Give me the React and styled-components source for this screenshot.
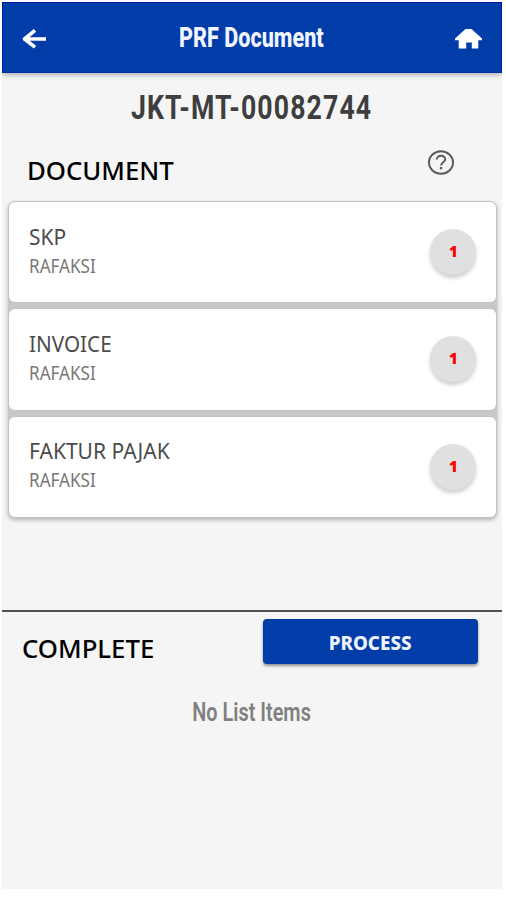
import React from "react";
import styled, { createGlobalStyle } from "styled-components";

const GlobalStyle = createGlobalStyle`
  *, *::before, *::after { box-sizing: border-box; }
  body { margin: 0; background: #fff; }
`;

const Screen = styled.main`
  display: flex;
  flex-direction: column;
  width: 500px;
  height: 887px;
  margin: 2px 0 0 2px;
  background: #f5f5f5;
  overflow: hidden;
  font-family: "Noto Sans", "Open Sans", sans-serif;
`;

const Header = styled.header`
  flex: none;
  display: flex;
  align-items: center;
  justify-content: space-between;
  height: 71px;
  padding: 2px 19px 0 18px;
  background: #003da8;
  border: 1px solid #0018a0;
  border-bottom-color: #0030a4;
  box-shadow: 0 2px 5px rgba(0, 0, 0, 0.28);
`;

const IconButton = styled.button`
  display: flex;
  width: 27px;
  height: 20px;
  padding: 0;
  border: 0;
  background: none;
  color: ${(p) => p.$color || "#fff"};
`;

const Label = styled.span`
  display: inline-block;
  white-space: nowrap;
  font-size: ${(p) => p.$size}px;
  line-height: ${(p) => p.$line || p.$size}px;
  font-weight: ${(p) => p.$weight || 400};
  letter-spacing: ${(p) => p.$spacing || 0}px;
  color: ${(p) => p.$color || "#000"};
  transform: scaleX(${(p) => p.$stretch || 1});
  transform-origin: ${(p) => p.$origin || "left"} center;
`;

const CondensedLabel = styled(Label)`
  font-family: Roboto, "Liberation Sans", sans-serif;
  transform-origin: center;
`;

const DocumentNumber = styled.div`
  flex: none;
  display: flex;
  justify-content: center;
  height: 74px;
  padding-top: 14px;
`;

const SectionHeading = styled.div`
  flex: none;
  display: flex;
  justify-content: space-between;
  height: 54px;
  padding: 3px 48px 0 25px;
`;

const HelpButton = styled(IconButton)`
  width: 26px;
  height: 25px;
  color: #5a5a5a;
`;

const CardList = styled.div`
  flex: none;
  display: flex;
  flex-direction: column;
  gap: 5px;
  margin: 0 5px 0 6px;
  height: 317px;
  border-radius: 7px;
  background: #c8c8c8;
  box-shadow: 0 2px 4px rgba(0, 0, 0, 0.28);
`;

const Card = styled.article`
  flex: 1;
  display: flex;
  align-items: center;
  justify-content: space-between;
  padding: 0 20px;
  border: 1px solid #c3c3c3;
  border-radius: 7px;
  background: #fff;
`;

const CardText = styled.div`
  display: flex;
  flex-direction: column;
  align-items: flex-start;
  gap: 3px;
  padding-bottom: 2px;
`;

const Count = styled.div`
  display: flex;
  justify-content: center;
  width: 46px;
  height: 46px;
  padding: 15px 0 0 1px;
  border-radius: 50%;
  background: #e0e0e0;
  box-shadow: 0 3px 4px rgba(0, 0, 0, 0.2);
`;

const CompleteSection = styled.section`
  margin-top: 92px;
  border-top: 2px solid #505050;
`;

const CompleteBar = styled.div`
  display: flex;
  justify-content: space-between;
  padding: 7px 24px 0 20px;
`;

const ProcessButton = styled.button`
  width: 215px;
  height: 45px;
  padding: 4px 0 0;
  border: 0;
  border-radius: 4px;
  background: #003da8;
  font-family: inherit;
  box-shadow: 0 2px 3px rgba(0, 0, 0, 0.4);
`;

const EmptyMessage = styled.div`
  display: flex;
  justify-content: center;
  padding-top: 35px;
`;

const CompleteTitle = styled.div`
  padding-top: 17px;
`;

const DocumentTitle = styled.div`
  padding-top: 8px;
`;

const documents = [
  { name: "SKP", stretch: 0.95 },
  { name: "INVOICE", stretch: 0.94 },
  { name: "FAKTUR PAJAK", stretch: 0.955 },
];

function BackIcon() {
  return (
    <svg width="27" height="20" viewBox="0 0 27 20" fill="none" stroke="currentColor" strokeWidth="3.6" strokeLinejoin="round">
      <path d="M14 1.4 3.5 10 14 18.2M3.5 10h21.5" />
    </svg>
  );
}

function HomeIcon() {
  return (
    <svg width="27" height="20" viewBox="0 0 27 20" fill="currentColor">
      <path d="M10.5 0h6L27 9.5v1.7h-3.7v8.3h-6.5v-6h-5.6v6H3.7v-8.3H0V9.5Z" />
    </svg>
  );
}

function HelpIcon() {
  return (
    <svg width="26" height="25" viewBox="0 0 26 25" fill="none" stroke="currentColor" strokeWidth="2">
      <ellipse cx="13" cy="12.5" rx="12" ry="11.2" />
      <path d="M8.8 9.6c0-2.2 1.8-3.8 4.2-3.8s4.2 1.6 4.2 3.7c0 2.7-4.1 3-4.1 6" />
      <path d="M13 17v2.3" strokeWidth="2.4" />
    </svg>
  );
}

export default function App() {
  return (
    <>
      <GlobalStyle />
      <Screen>
        <Header>
          <IconButton aria-label="Back"><BackIcon /></IconButton>
          <CondensedLabel $size={27} $weight={800} $color="#f1f5ff" $stretch={0.8}>PRF Document</CondensedLabel>
          <IconButton aria-label="Home"><HomeIcon /></IconButton>
        </Header>
        <DocumentNumber>
          <CondensedLabel $size={34} $line={40} $weight={700} $spacing={1.4} $color="#3e3e3e" $stretch={0.785}>JKT-MT-00082744</CondensedLabel>
        </DocumentNumber>
        <SectionHeading>
          <DocumentTitle><Label $size={25} $weight={500} $stretch={1.03}>DOCUMENT</Label></DocumentTitle>
          <HelpButton aria-label="Help"><HelpIcon /></HelpButton>
        </SectionHeading>
        <CardList>
          {documents.map((doc) => (
            <Card key={doc.name}>
              <CardText>
                <Label $size={22} $line={27} $color="#4b4b4b" $stretch={doc.stretch}>{doc.name}</Label>
                <Label $size={19} $line={27} $color="#777" $stretch={0.9}>RAFAKSI</Label>
              </CardText>
              <Count><Label $size={15} $weight={900} $color="#f00">1</Label></Count>
            </Card>
          ))}
        </CardList>
        <CompleteSection>
          <CompleteBar>
            <CompleteTitle><Label $size={25} $weight={500} $stretch={1.03}>COMPLETE</Label></CompleteTitle>
            <ProcessButton>
              <Label $size={20} $weight={800} $color="#eef3ff" $stretch={0.94} $origin="center">PROCESS</Label>
            </ProcessButton>
          </CompleteBar>
          <EmptyMessage>
            <CondensedLabel $size={26} $weight={600} $color="#808080" $stretch={0.765}>No List Items</CondensedLabel>
          </EmptyMessage>
        </CompleteSection>
      </Screen>
    </>
  );
}
